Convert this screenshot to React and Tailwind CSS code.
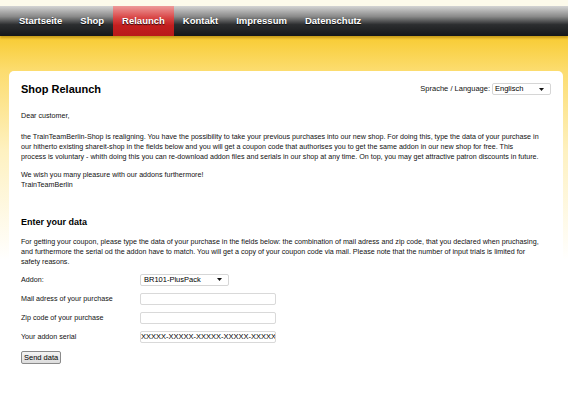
import React from "react";

const navItems = ["Startseite", "Shop", "Relaunch", "Kontakt", "Impressum", "Datenschutz"];

const introLines = [
    "the TrainTeamBerlin-Shop is realigning. You have the possibility to take your previous purchases into our new shop. For doing this, type the data of your purchase in",
    "our hitherto existing shareit-shop in the fields below and you will get a coupon code that authorises you to get the same addon in our new shop for free. This",
    "process is voluntary - whith doing this you can re-download addon files and serials in our shop at any time. On top, you may get attractive patron discounts in future.",
];

const dataLines = [
    "For getting your coupon, please type the data of your purchase in the fields below: the combination of mail adress and zip code, that you declared when pruchasing,",
    "and furthermore the serial od the addon have to match. You will get a copy of your coupon code via mail. Please note that the number of input trials is limited for",
    "safety reasons.",
];

const Caret = () => (
    <svg width="5" height="3" viewBox="0 0 5 3" className="shrink-0">
        <path d="M0 0h5L2.5 3z" fill="#111" />
    </svg>
);

const Field = ({ label, children }) => (
    <div className="flex items-center h-[19px]">
        <span className="w-[119px]">{label}</span>
        {children}
    </div>
);

const Lines = ({ lines, className }) => (
    <div className={className}>
        {lines.map((line) => (
            <div key={line} className="whitespace-nowrap">
                {line}
            </div>
        ))}
    </div>
);

const App = () => {
    return (
        <div
            className="min-h-screen bg-[linear-gradient(to_bottom,#fdfaeb_0px,#fdfaeb_6px,#f8cb32_36px,#fcdc6e_70px,#fef1c0_150px,#ffffff_260px)]"
            style={{ fontFamily: '"Liberation Sans", Arial, sans-serif' }}
        >
            <div className="h-[6px]" />
            <nav className="h-[30px] flex pl-[10px] bg-[linear-gradient(to_bottom,#d4d4d4_0%,#8a8a8a_35%,#2c2e30_62%,#151719_100%)] shadow-[0_2px_2px_rgba(140,100,0,0.45)]">
                {navItems.map((item) => (
                    <a
                        key={item}
                        className={`px-[9px] flex items-center text-[9.5px] font-bold text-white [text-shadow:0_1px_1px_rgba(0,0,0,0.8)] ${item === "Relaunch"
                            ? "bg-[linear-gradient(to_bottom,#ee9a9a_0%,#d84444_40%,#c21f1f_65%,#b81a1a_100%)]"
                            : ""
                            }`}
                    >
                        {item}
                    </a>
                ))}
            </nav>

            <div className="pt-[35px] pl-[9px] pr-[5px]">
                <div className="bg-white rounded-t-[5px] px-[12px] pt-[11px] pb-[30px] text-[7.15px] leading-[10px] text-[#111]">
                    <div className="flex items-center justify-between h-[14px]">
                        <h1 className="text-[11px] font-bold text-black leading-[14px]">Shop Relaunch</h1>
                        <div className="flex items-center gap-[2px] text-[7.5px]">
                            <span>Sprache / Language:</span>
                            <div className="w-[59px] h-[12px] border border-[#d6d6d6] rounded-[2px] bg-white flex items-center justify-between pl-[2px] pr-[6px] text-black">
                                <span>Englisch</span>
                                <Caret />
                            </div>
                        </div>
                    </div>

                    <p className="mt-[15px]">Dear customer,</p>
                    <Lines lines={introLines} className="mt-[11px]" />
                    <p className="mt-[8px]">
                        We wish you many pleasure with our addons furthermore!
                        <br />
                        TrainTeamBerlin
                    </p>

                    <h2 className="mt-[26px] text-[9px] font-bold text-black leading-[12px]">Enter your data</h2>
                    <Lines lines={dataLines} className="mt-[9px]" />

                    <div className="mt-[3px]">
                        <Field label="Addon:">
                            <div className="w-[89px] h-[12px] border border-[#d6d6d6] rounded-[2px] flex items-center justify-between pl-[3px] pr-[6px] text-black text-[7.5px]">
                                <span>BR101-PlusPack</span>
                                <Caret />
                            </div>
                        </Field>
                        <Field label="Mail adress of your purchase">
                            <div className="w-[136px] h-[12px] border border-[#d9d9d9] rounded-[2px]" />
                        </Field>
                        <Field label="Zip code of your purchase">
                            <div className="w-[136px] h-[12px] border border-[#d9d9d9] rounded-[2px]" />
                        </Field>
                        <Field label="Your addon serial">
                            <div className="w-[136px] h-[12px] border border-[#d9d9d9] rounded-[2px] overflow-hidden whitespace-nowrap text-black text-[7.5px] leading-[10px]">
                                XXXXX-XXXXX-XXXXX-XXXXX-XXXXX
                            </div>
                        </Field>
                    </div>

                    <button className="mt-[5px] h-[13px] px-[2px] border border-[#8a8a8a] rounded-[2px] bg-[linear-gradient(to_bottom,#f4f4f4,#dcdcdc)] text-[7.5px] leading-[11px] text-black">
                        Send data
                    </button>
                </div>
            </div>
        </div>
    );
};

export default App;
